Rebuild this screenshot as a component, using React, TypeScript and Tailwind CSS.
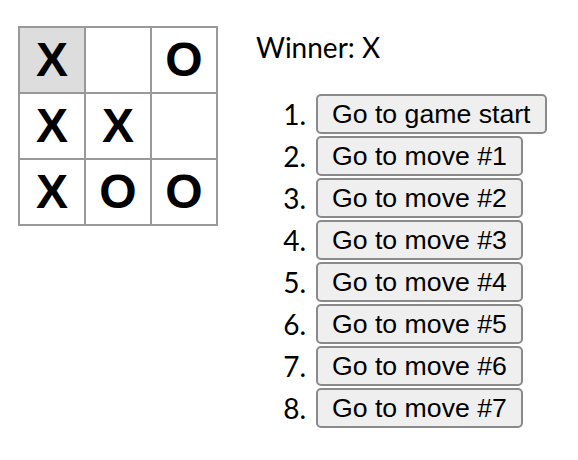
import React from 'react';

const squares = ['X', '', 'O', 'X', 'X', '', 'X', 'O', 'O'];
const moves = [
  'Go to game start',
  'Go to move #1',
  'Go to move #2',
  'Go to move #3',
  'Go to move #4',
  'Go to move #5',
  'Go to move #6',
  'Go to move #7',
];

export default function App() {
  return (
    <div className="w-[578px] h-[460px] bg-white flex items-start pt-[26px] pl-[18px]">
      <div className="grid grid-cols-3 gap-[2px] p-[2px] bg-[#999]">
        {squares.map((v, i) => (
          <button
            key={i}
            className={`w-[64px] h-[64px] flex items-center justify-center text-[48px] font-bold text-black font-['Liberation_Sans',Arial,sans-serif] ${
              i === 0 ? 'bg-[#dddddd]' : 'bg-white'
            }`}
          >
            {v}
          </button>
        ))}
      </div>

      <div className="ml-[38px] pt-[4px] font-['Lato',sans-serif] text-black">
        <div className="text-[28px] leading-[34px]">Winner: X</div>
        <ol className="mt-[29px]">
          {moves.map((m, i) => (
            <li key={i} className="flex items-center h-[42px]">
              <span className="w-[50px] text-right text-[28px] leading-[34px]">{i + 1}.</span>
              <button className="ml-[10px] h-[40px] px-[14px] border-2 border-[#8a8a8a] rounded-[5px] bg-[#efefef] text-[26.67px] leading-none font-['Liberation_Sans',Arial,sans-serif] text-black">
                {m}
              </button>
            </li>
          ))}
        </ol>
      </div>
    </div>
  );
}
